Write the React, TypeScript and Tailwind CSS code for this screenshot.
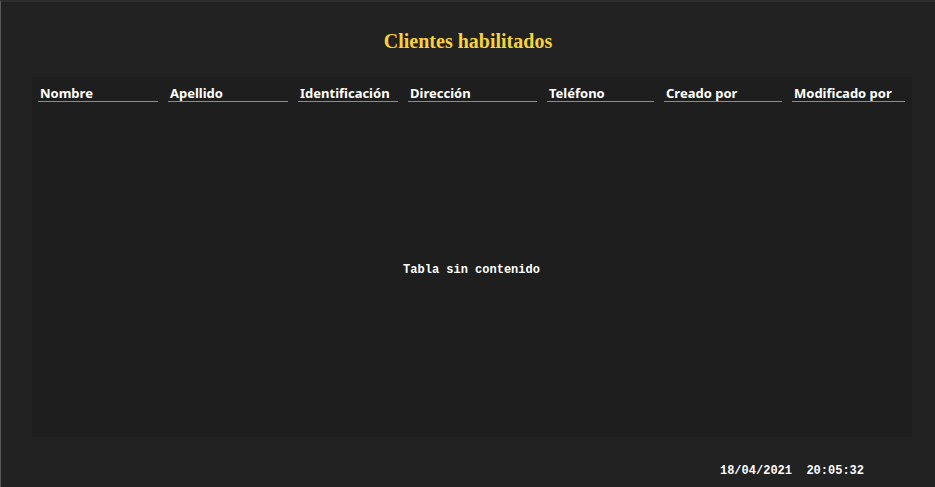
import React from "react";

const cols: { label: string; w: string }[] = [
  { label: "Nombre", w: "w-[120px]" },
  { label: "Apellido", w: "w-[120px]" },
  { label: "Identificación", w: "w-[100px]" },
  { label: "Dirección", w: "w-[129px]" },
  { label: "Teléfono", w: "w-[107px]" },
  { label: "Creado por", w: "w-[118px]" },
  { label: "Modificado por", w: "w-[113px]" },
];

export default function App() {
  return (
    <div className="w-[935px] h-[487px] bg-[#222222] border-t-2 border-t-[#2f2f2f] border-l border-l-[#5a5a5a] flex flex-col overflow-hidden">
      <div className="h-[75px] pt-[27px] flex justify-center">
        <h1 className="text-[20px] leading-[24px] font-bold text-[#f7d23a] [font-family:'Liberation_Serif',serif]">
          Clientes habilitados
        </h1>
      </div>
      <div className="ml-[31px] w-[880px] h-[360px] bg-[#1e1e1e] pl-[6px] pr-[7px] pt-[8px] flex flex-col">
        <div className="flex gap-[10px]">
          {cols.map((c) => (
            <div
              key={c.label}
              className={`${c.w} border-b border-b-[#8c8c8c] pl-[2px] text-[13px] leading-[16px] font-bold text-white [font-family:'Noto_Sans',sans-serif]`}
            >
              {c.label}
            </div>
          ))}
        </div>
        <div className="flex-1 flex items-center justify-center">
          <span className="text-[12px] font-bold text-white [font-family:'Liberation_Mono',monospace]">
            Tabla sin contenido
          </span>
        </div>
      </div>
      <div className="flex justify-end pr-[71px] pt-[27px]">
        <span className="text-[12px] leading-[14px] font-bold text-white whitespace-pre [font-family:'Liberation_Mono',monospace]">
          {"18/04/2021  20:05:32"}
        </span>
      </div>
    </div>
  );
}
